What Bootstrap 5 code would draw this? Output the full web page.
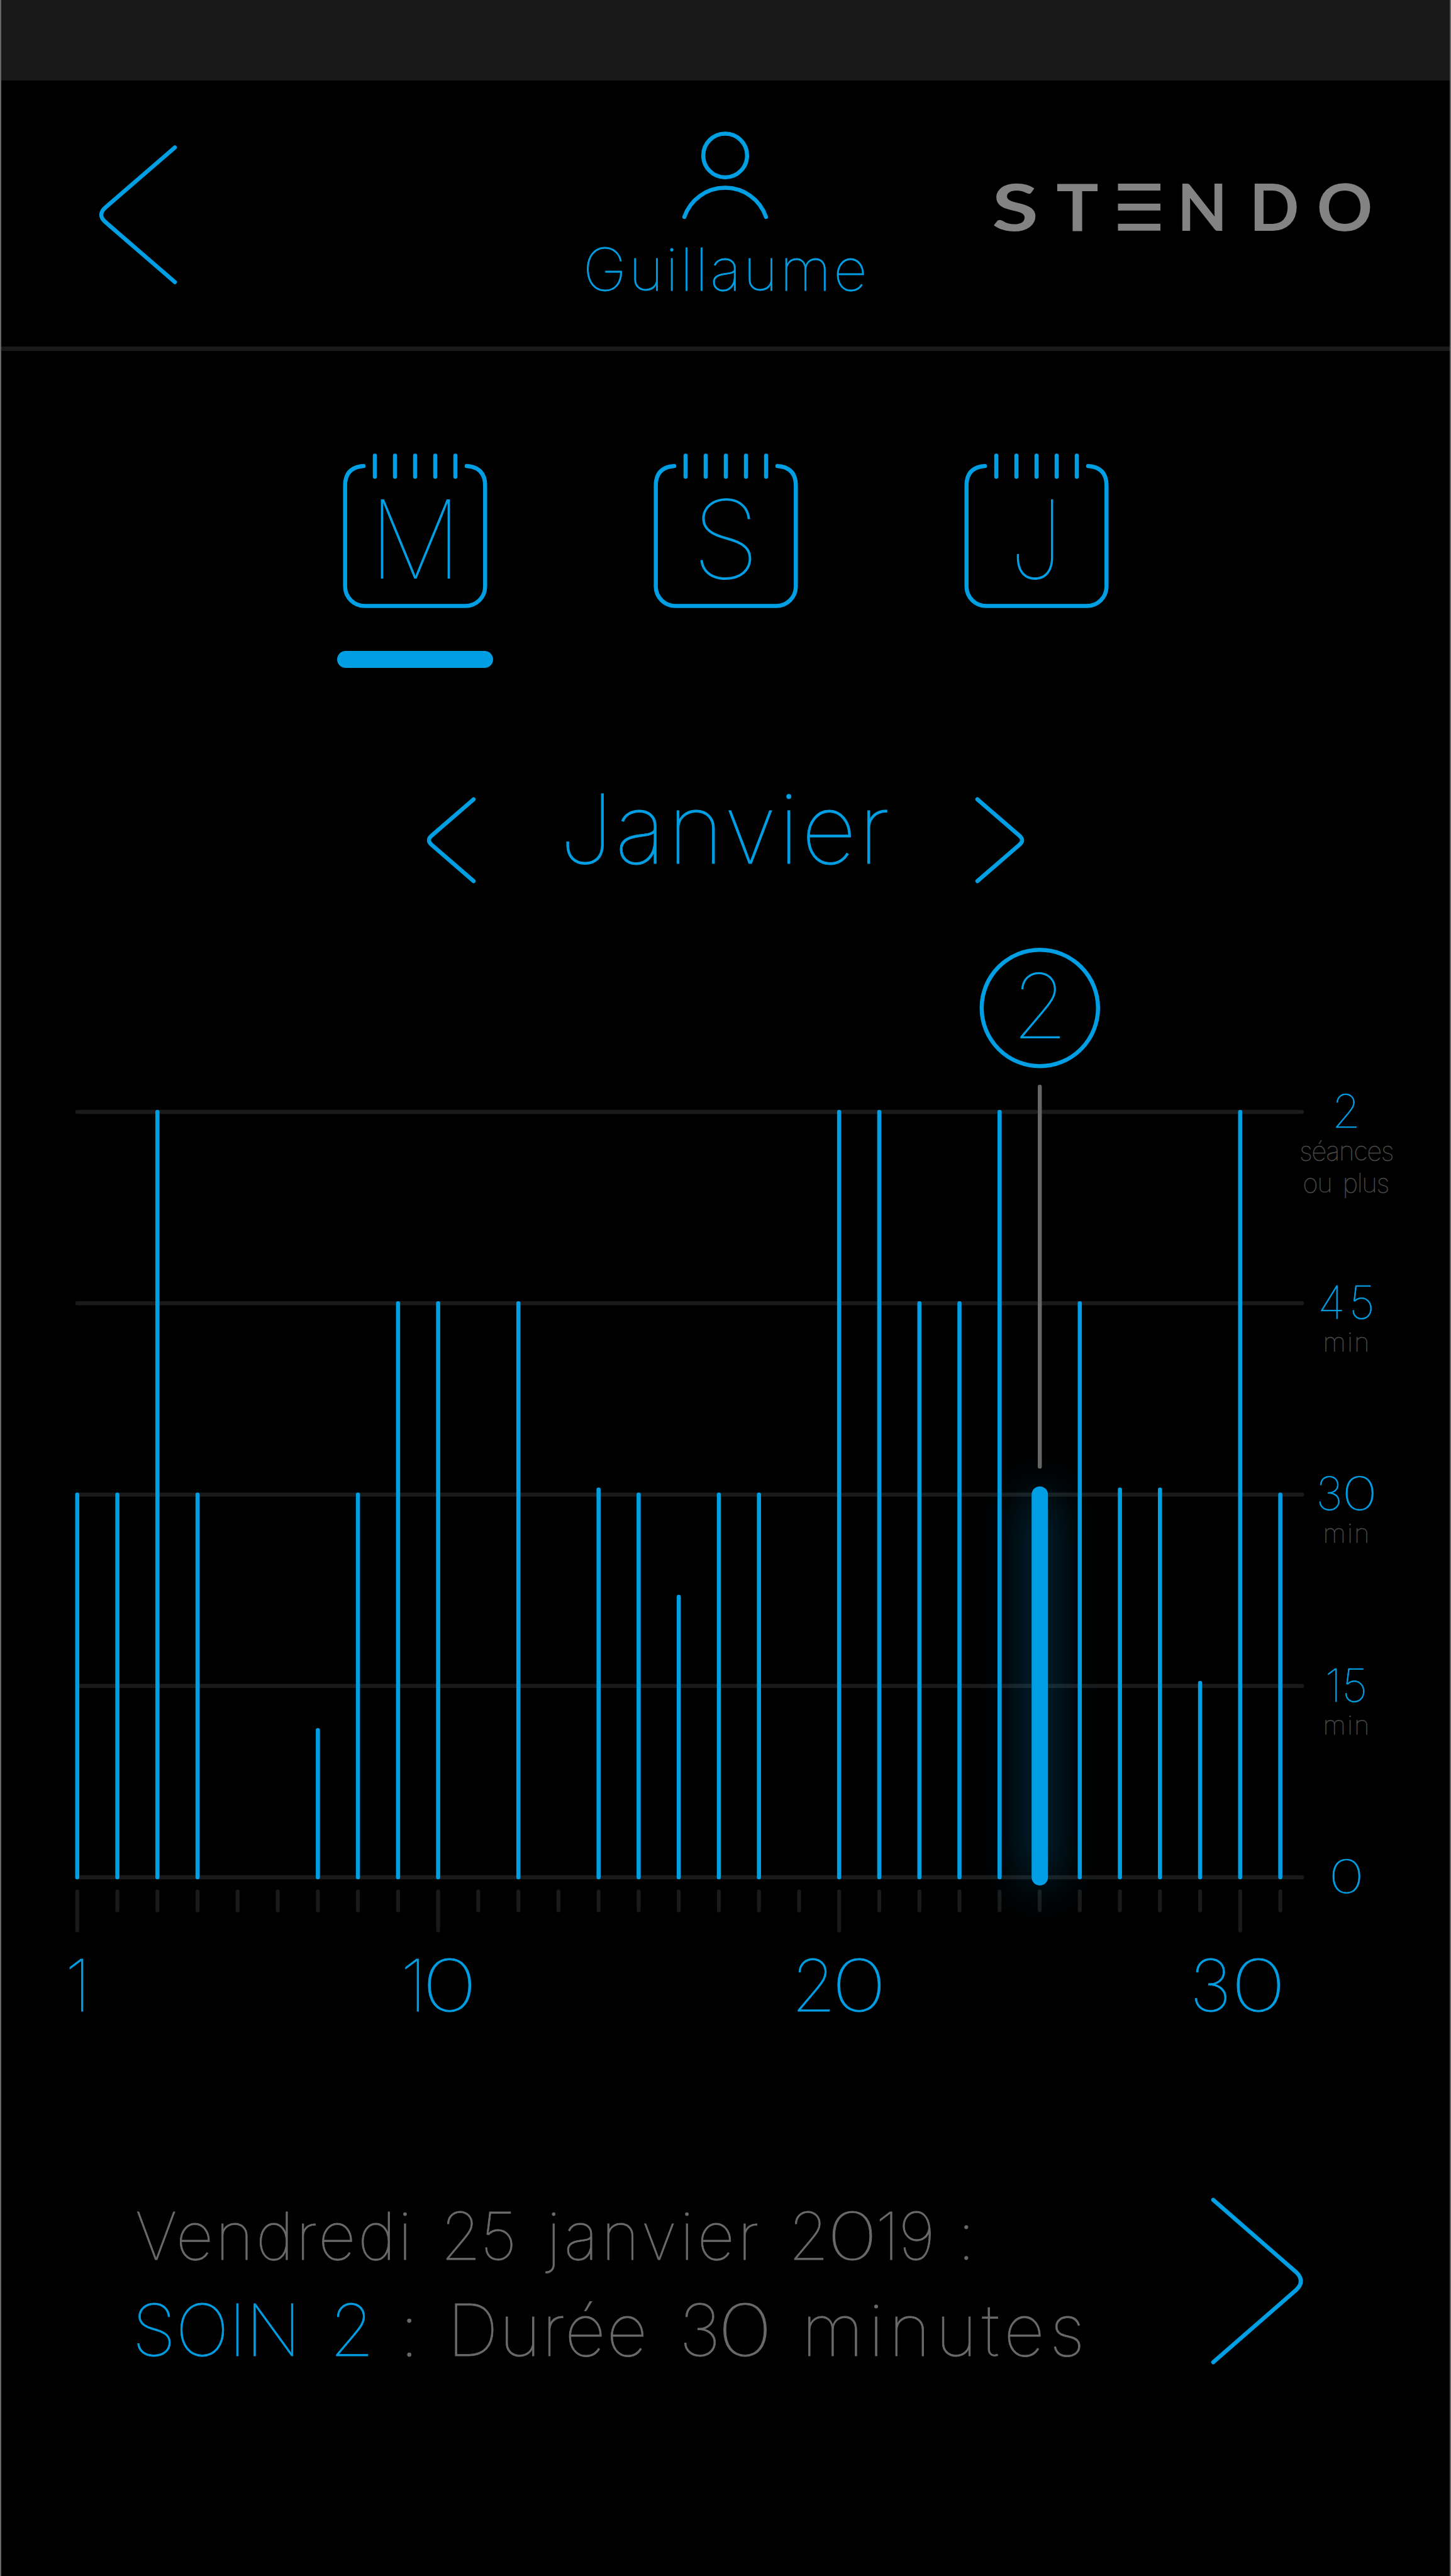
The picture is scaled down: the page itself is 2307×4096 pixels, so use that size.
<!DOCTYPE html>
<html lang="fr">
<head>
<meta charset="utf-8">
<meta name="viewport" content="width=device-width, initial-scale=1">
<title>Stendo – Suivi mensuel</title>
<link rel="stylesheet" href="https://cdn.jsdelivr.net/npm/bootstrap@5.3.0/dist/css/bootstrap.min.css">
<style>
  :root { --blue: #009ee3; --line: #1a1a1a; --grey: #6a6a6a; }
  body { background: #000; color: var(--blue); font-family: Inter, "Liberation Sans", sans-serif; font-weight: 100; -webkit-text-stroke: .8px currentColor; }
  .screen { width: 2307px; height: 4096px; border-left: 2px solid #666; border-right: 2px solid #666; }
  .status { height: 128px; background: #181818; }
  .topbar { height: 430px; border-bottom: 7px solid var(--line); }
  svg { display: block; overflow: visible; flex: none; }
  .stroke { fill: none; stroke: var(--blue); stroke-width: 6.5; stroke-linecap: round; stroke-linejoin: round; }
  .stroke.rule { stroke: var(--line); }
  .stroke.tick { stroke: var(--line); stroke-width: 6.2; }
  .stroke.bar { stroke-width: 6.6; }
  .stroke.pointer { stroke: #666; stroke-width: 6.4; }
  .stroke.chosen { stroke-width: 26; }
  .back { padding: 102px 0 0 154px; }
  .user { padding-top: 81px; }
  .user-name { font-size: 94px; line-height: 80px; letter-spacing: 3.4px; padding-left: 2px; margin-top: 39px; }
  .logo { padding: 157px 0 0 38px; }
  .logo text { font: 700 104px Lato, sans-serif; fill: #838383; text-anchor: middle; -webkit-text-stroke: 0; }
  .periods { margin-top: 160px; gap: 246px; }
  .period { width: 248px; }
  .period text { font-size: 173px; fill: var(--blue); text-anchor: middle; -webkit-text-stroke: 1.6px var(--blue); }
  .period-mark { width: 248px; height: 27px; margin-top: 67px; background: var(--blue); }
  .month { width: 951px; margin: 204px auto 0; }
  .month-name { font-size: 153px; line-height: 100px; letter-spacing: 3.3px; margin-top: 2px; width: 560px; -webkit-text-stroke-width: .9px; }
  .chart { margin-top: 94px; }
  .bubble { font-size: 143px; fill: var(--blue); text-anchor: middle; -webkit-text-stroke: 1.2px var(--blue); }
  .scale { width: 145px; padding-top: 237px; -webkit-text-stroke-width: .6px; }
  .level { height: 304.2px; }
  .level-value { font-size: 73px; line-height: 60px; }
  .level-unit { font-size: 42px; line-height: 51px; margin-top: 7px; color: #4c4c4c; letter-spacing: 2px; padding-left: 2px; -webkit-text-stroke-color: #4c4c4c; -webkit-text-stroke-width: .5px; }
  .level-unit.sessions { letter-spacing: -1.4px; word-spacing: 7px; margin-left: -4px; }
  .wide { letter-spacing: 6px; padding-left: 6px; }
  .zero { display: inline-block; transform: scaleX(1.33); margin: 0 .075em; }
  .days { padding-left: 22px; font-size: 114px; line-height: 110px; margin-top: 21.6px; }
  .day { width: 200px; }
  .tight { letter-spacing: -7px; }
  .detail { margin-top: 268px; }
  .phrase { width: 1923px; line-height: 150.6px; color: #6a6a6a; -webkit-text-stroke-color: #6a6a6a; }
  .date-line { font-size: 104px; padding-left: 213px; }
  .care-line { font-size: 114px; padding-left: 208px; }
  .care-name { color: var(--blue); -webkit-text-stroke-color: var(--blue); }
  .next { margin-top: 14.6px; }
</style>
</head>
<body>
<main class="screen d-flex flex-column overflow-hidden">
  <div class="status"></div>

  <header class="topbar row g-0">
    <div class="col-4 back">
      <svg width="126" height="222" viewBox="156 230 126 222"><path class="stroke" d="M278 234.5L167.500 330Q154.500 341.500 167.500 353L278 448.500"/></svg>
    </div>
    <div class="col-4 user d-flex flex-column align-items-center">
      <svg width="140" height="140" viewBox="1083.5 209 140 140"><circle class="stroke" cx="1153.5" cy="247.200" r="34.800"/><path class="stroke" d="M1088.600 345A68.500 68.500 0 0 1 1218.400 345"/></svg>
      <div class="user-name">Guillaume</div>
    </div>
    <div class="col-4 logo">
      <svg width="610" height="90" viewBox="1575 285 610 90" role="img" aria-label="STENDO">
        <text transform="translate(1614 366.700) scale(1.3 1)">S</text>
        <text transform="translate(1713 366.700) scale(1.08 1)">T</text>
        <path fill="#838383" d="M1777.500 292h67.500v11h-67.500zM1777.500 323.700h67.500v11h-67.500zM1777.500 355.700h67.500v11h-67.500z"/>
        <text transform="translate(1911.500 366.700)">N</text>
        <text transform="translate(2026 366.700)">D</text>
        <text transform="translate(2138 366.700) scale(1.06 1)">O</text>
      </svg>
    </div>
  </header>

  <nav class="periods d-flex justify-content-center">
    <div class="period d-flex flex-column align-items-center">
      <svg width="232" height="250" viewBox="-116 0 232 250">
        <path class="stroke" d="M-82 23Q-111.300 25-111.300 54V215A31 31 0 0 0-80.300 245.500H80.300A31 31 0 0 0 111.300 215V54Q111.300 25 82 23M-64 6.500V40M-32 6.500V40M0 6.500V40M32 6.500V40M64 6.500V40"/>
        <text transform="translate(.500 201.800) scale(.950 1)">M</text>
      </svg>
      <div class="period-mark rounded-pill"></div>
    </div>
    <div class="period d-flex flex-column align-items-center">
      <svg width="232" height="250" viewBox="-116 0 232 250">
        <path class="stroke" d="M-82 23Q-111.300 25-111.300 54V215A31 31 0 0 0-80.300 245.500H80.300A31 31 0 0 0 111.300 215V54Q111.300 25 82 23M-64 6.500V40M-32 6.500V40M0 6.500V40M32 6.500V40M64 6.500V40"/>
        <text transform="translate(0 201.800) scale(1.02 1)">S</text>
      </svg>
    </div>
    <div class="period d-flex flex-column align-items-center">
      <svg width="232" height="250" viewBox="-116 0 232 250">
        <path class="stroke" d="M-82 23Q-111.300 25-111.300 54V215A31 31 0 0 0-80.300 245.500H80.300A31 31 0 0 0 111.300 215V54Q111.300 25 82 23M-64 6.500V40M-32 6.500V40M0 6.500V40M32 6.500V40M64 6.500V40"/>
        <text transform="translate(-1 201.800) scale(.87 1)">J</text>
      </svg>
    </div>
  </nav>

  <div class="month d-flex justify-content-between">
    <svg width="80" height="140" viewBox="678 1266 80 140"><path class="stroke" d="M753 1271L686.500 1328.500Q677.500 1336 686.500 1343.500L753 1401"/></svg>
    <div class="month-name text-center">Janvier</div>
    <svg width="80" height="140" viewBox="1549 1266 80 140"><path class="stroke" d="M1554 1271L1620.500 1328.500Q1629.500 1336 1620.500 1343.500L1554 1401"/></svg>
  </div>

  <section class="chart d-flex">
    <svg width="2066" height="1580" viewBox="2 1500 2066 1580">
      <defs><filter id="halo" x="-900%" y="-30%" width="1900%" height="160%"><feGaussianBlur stdDeviation="36"/></filter></defs>
      <!-- duration levels -->
      <path class="stroke rule" d="M122.800 1768H2070M122.800 2072.200H2070M122.800 2376.500H2070M122.800 2680.700H2070M122.800 2985H2070"/>
      <!-- day ticks -->
      <path class="stroke tick" d="M122.800 3007.500V3069.500M186.600 3007.500v30M250.300 3007.500v30M314.100 3007.500v30M377.800 3007.500v30M441.600 3007.500v30M505.400 3007.500v30M569.100 3007.500v30M632.900 3007.500v30M696.600 3007.500V3069.500M760.400 3007.500v30M824.200 3007.500v30M887.900 3007.500v30M951.700 3007.500v30M1015.400 3007.500v30M1079.200 3007.500v30M1143 3007.500v30M1206.700 3007.500v30M1270.500 3007.500v30M1334.200 3007.500V3069.500M1398 3007.500v30M1461.800 3007.500v30M1525.500 3007.500v30M1589.300 3007.500v30M1653 3007.500v30M1716.800 3007.500v30M1780.600 3007.500v30M1844.300 3007.500v30M1908.100 3007.500v30M1971.800 3007.500V3069.500M2035.600 3007.500v30"/>
      <!-- selected day halo -->
      <rect x="1633" y="2372" width="40" height="626" rx="20" fill="#009ee3" opacity=".38" filter="url(#halo)"/>
      <!-- one bar per day with a session -->
      <path class="stroke bar" d="M122.800 2985V2376.500M186.600 2985V2376.500M250.300 2985V1768M314.100 2985V2376.500M505.400 2985V2751M569.100 2985V2376.500M632.900 2985V2072.200M696.600 2985V2072.200M824.200 2985V2072.200M951.700 2985V2368.500M1015.400 2985V2376.500M1079.200 2985V2539M1143 2985V2376.500M1206.700 2985V2376.500M1334.200 2985V1768M1398 2985V1768M1461.800 2985V2072.200M1525.500 2985V2072.200M1589.300 2985V1768M1716.800 2985V2072.200M1780.600 2985V2368.500M1844.300 2985V2368.500M1908.100 2985V2676M1971.800 2985V1768M2035.600 2985V2376.500"/>
      <path class="stroke pointer" d="M1653.200 1728V2332"/>
      <path class="stroke chosen" d="M1653.200 2376.500V2985"/>
      <circle class="stroke" cx="1653.300" cy="1602.800" r="92.500"/>
      <text class="bubble" x="1653.300" y="1651">2</text>
    </svg>
    <div class="scale text-center text-nowrap">
      <div class="level"><div class="level-value">2</div><div class="level-unit sessions">séances<br>ou plus</div></div>
      <div class="level"><div class="level-value wide">45</div><div class="level-unit">min</div></div>
      <div class="level"><div class="level-value">3<span class="zero">0</span></div><div class="level-unit">min</div></div>
      <div class="level"><div class="level-value">15</div><div class="level-unit">min</div></div>
      <div class="level-value"><span class="zero">0</span></div>
    </div>
  </section>

  <div class="days d-flex text-center">
    <div class="day">1</div>
    <div class="day tight" style="margin-left:369px">1<span class="zero">0</span></div>
    <div class="day tight" style="margin-left:436px">2<span class="zero">0</span></div>
    <div class="day" style="margin-left:438px">3<span class="zero">0</span></div>
  </div>

  <section class="detail d-flex">
    <div class="phrase text-nowrap">
      <div class="date-line d-flex">
        <span style="letter-spacing:3.4px">Vendredi</span>
        <span style="letter-spacing:-2px;margin-left:42px">25</span>
        <span style="letter-spacing:4.9px;margin-left:49px">janvier</span>
        <span style="letter-spacing:-1.7px;margin-left:42px">2<span class="zero">0</span>19</span>
        <span style="margin-left:37px">:</span>
      </div>
      <div class="care-line d-flex">
        <span class="care-name" style="letter-spacing:-.9px">SOIN</span>
        <span class="care-name" style="margin-left:46.600px">2</span>
        <span style="margin-left:40px">:</span>
        <span style="letter-spacing:1.2px;margin-left:45px">Durée</span>
        <span style="letter-spacing:-5px;margin-left:49px">3<span class="zero">0</span></span>
        <span style="letter-spacing:7.6px;margin-left:54px">minutes</span>
      </div>
    </div>
    <svg class="next" width="148" height="266" viewBox="1924.500 3494 148 266"><path class="stroke" d="M1928.500 3498L2061 3613.500Q2074.500 3627 2061 3640.500L1928.500 3756"/></svg>
  </section>
</main>
<script src="https://cdn.jsdelivr.net/npm/bootstrap@5.3.0/dist/js/bootstrap.bundle.min.js"></script>
</body>
</html>
